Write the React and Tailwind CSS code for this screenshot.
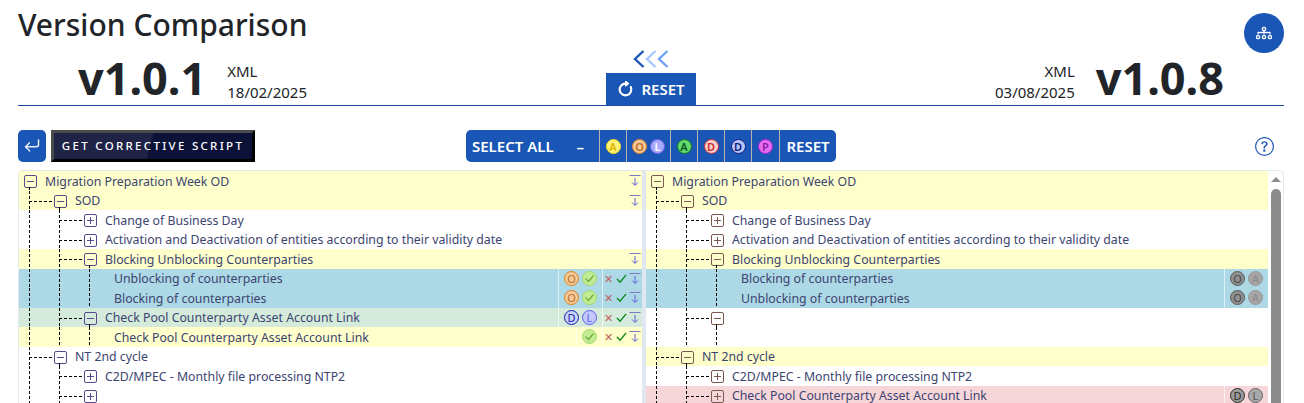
import React from 'react'
import { BsArrowClockwise, BsArrowReturnLeft, BsDiagram3, BsQuestionCircle } from 'react-icons/bs'

const BADGE_STYLES = {
  yellow: 'bg-[#fff27a] border-[#f2d91a] text-[#e0b400]',
  orange: 'bg-[#f7c89a] border-[#dc8420] text-[#b86f1e]',
  violet: 'bg-[#a9a8ff] border-[#6a63e0] text-white',
  green: 'bg-[#62d96f] border-[#0c7a1c] text-[#0c5a1c]',
  red: 'bg-[#fbd0d0] border-[#c92a2a] text-[#c92a2a]',
  navy: 'bg-[#b5c6f7] border-[#10187e] text-[#10187e]',
  pink: 'bg-[#e66cf0] border-[#a51fd0] text-[#8a1aa8]',
  blueD: 'bg-[#c7d5fa] border-[#1a1aa8] text-[#1a1aa8]',
  blueL: 'bg-[#c4c8fc] border-[#5a5ff0] text-[#5a5ff0]',
  check: 'bg-[#c2eb95] border-[#a5d96a] text-[#6fae3a]',
  greyDark: 'bg-[#8f8f8f] border-[#5c5c5c] text-[#4a4a4a]',
  greyLight: 'bg-[#a6a6a6] border-[#989898] text-[#8a8a8a]',
  greyD: 'bg-[#9a9a9a] border-[#2c2c2c] text-[#2c2c2c]',
  greyL: 'bg-[#a8a8a8] border-[#666666] text-[#555555]',
}

const ROW_BG = {
  white: 'bg-white',
  yellow: 'bg-[#ffffcc]',
  blue: 'bg-[#add8e6]',
  green: 'bg-[#d4ebdc]',
  pink: 'bg-[#f7d6da]',
}

const V_DASH = 'bg-[linear-gradient(#000_60%,transparent_60%)] bg-[length:1px_5px] bg-repeat-y'
const H_DASH = 'bg-[linear-gradient(90deg,#000_60%,transparent_60%)] bg-[length:5px_1px] bg-repeat-x'

const LEAF_BADGES = [['orange', 'O'], ['check', 'check']]
const GREY_BADGES = [['greyDark', 'O'], ['greyLight', 'A']]

// guides = full height dashed lines before the row, conn = elbow into the box
const leftRows = [
  { guides: 0, box: 'minus', text: 'Migration Preparation Week OD', bg: 'yellow', stem: true, arrow: true },
  { guides: 0, conn: true, box: 'minus', text: 'SOD', bg: 'yellow', stem: true, arrow: true },
  { guides: 1, conn: true, box: 'plus', text: 'Change of Business Day', bg: 'white' },
  { guides: 1, conn: true, box: 'plus', text: 'Activation and Deactivation of entities according to their validity date', bg: 'white' },
  { guides: 1, conn: true, box: 'minus', text: 'Blocking Unblocking Counterparties', bg: 'yellow', stem: true, arrow: true },
  { guides: 3, text: 'Unblocking of counterparties', bg: 'blue', badges: LEAF_BADGES, actions: true },
  { guides: 3, text: 'Blocking of counterparties', bg: 'blue', badges: LEAF_BADGES, actions: true },
  { guides: 1, conn: true, box: 'minus', text: 'Check Pool Counterparty Asset Account Link', bg: 'green', stem: true, badges: [['blueD', 'D'], ['blueL', 'L']], actions: true },
  { guides: 3, text: 'Check Pool Counterparty Asset Account Link', bg: 'yellow', badges: [['check', 'check']], actions: true },
  { guides: 0, conn: true, box: 'minus', text: 'NT 2nd cycle', bg: 'white', stem: true },
  { guides: 1, conn: true, box: 'plus', text: 'C2D/MPEC - Monthly file processing NTP2', bg: 'white' },
  { guides: 1, conn: true, box: 'plus', text: '', bg: 'white' },
]

const rightRows = [
  { guides: 0, box: 'minus', text: 'Migration Preparation Week OD', bg: 'yellow', stem: true },
  { guides: 0, conn: true, box: 'minus', text: 'SOD', bg: 'yellow', stem: true },
  { guides: 1, conn: true, box: 'plus', text: 'Change of Business Day', bg: 'white' },
  { guides: 1, conn: true, box: 'plus', text: 'Activation and Deactivation of entities according to their validity date', bg: 'white' },
  { guides: 1, conn: true, box: 'minus', text: 'Blocking Unblocking Counterparties', bg: 'yellow', stem: true },
  { guides: 3, text: 'Blocking of counterparties', bg: 'blue', badges: GREY_BADGES },
  { guides: 3, text: 'Unblocking of counterparties', bg: 'blue', badges: GREY_BADGES },
  { guides: 1, conn: true, box: 'minus', text: '', bg: 'white', stem: true },
  { guides: 3, text: '', bg: 'white' },
  { guides: 0, conn: true, box: 'minus', text: 'NT 2nd cycle', bg: 'yellow', stem: true },
  { guides: 1, conn: true, box: 'plus', text: 'C2D/MPEC - Monthly file processing NTP2', bg: 'white' },
  { guides: 1, conn: true, box: 'plus', text: 'Check Pool Counterparty Asset Account Link', bg: 'pink', badges: [['greyD', 'D'], ['greyL', 'L']] },
]

function Badge({ tone, label }) {
  return (
    <span className={`w-[15px] h-[15px] text-[11px] ${BADGE_STYLES[tone]} rounded-full border flex items-center justify-center leading-none shrink-0`}>
      {label === 'check' ? (
        <svg className="w-[11px] h-[11px]" viewBox="0 0 11 11" fill="none" stroke="currentColor" strokeWidth="1.2">
          <path d="M1.5 5.5L4.5 8.5L9.5 2.5" />
        </svg>
      ) : label}
    </span>
  )
}

function DownToLine() {
  return (
    <svg className="w-[12px] h-[13px] shrink-0" viewBox="0 0 12 13" fill="none" stroke="#6060d8" strokeWidth="1">
      <path d="M0.5 1.5H11.5" stroke="#7a7ac0" />
      <path d="M6 4V11M3 8.5L6 11.5L9 8.5" />
    </svg>
  )
}

function Chevron({ color }) {
  return (
    <svg className={`w-[12px] h-[18px] ${color}`} viewBox="0 0 12 18" fill="none" stroke="currentColor" strokeWidth="2.4">
      <path d="M10.5 1L2 9L10.5 17" />
    </svg>
  )
}

function Box({ kind, stem, color }) {
  return (
    <span className={`relative mt-[2px] w-[13px] h-[13px] shrink-0 rounded-[2px] border ${color} flex items-center justify-center`}>
      <span className="absolute w-[7px] h-px bg-current" />
      {kind === 'plus' && <span className="absolute w-px h-[7px] bg-current" />}
      {stem && <span className={`absolute left-[4px] top-full w-px h-[4px] ${V_DASH}`} />}
    </span>
  )
}

function Row({ row, boxColor, showActions }) {
  return (
    <div className={`flex items-center h-[19.5px] pl-[10px] ${ROW_BG[row.bg]}`}>
      {Array.from({ length: row.guides }).map((_, i) => (
        <span key={i} className={`w-[30px] h-full shrink-0 ${V_DASH}`} />
      ))}
      {row.conn && (
        <span className={`w-[25px] h-full shrink-0 flex items-center ${V_DASH}`}>
          <span className={`w-full h-px mt-[2px] ${H_DASH}`} />
        </span>
      )}
      {row.box ? (
        <>
          <span className={`flex ${row.conn ? '' : '-ml-[5px]'}`}>
            <Box kind={row.box} stem={row.stem} color={boxColor} />
          </span>
          <span className="ml-[8px] mt-[2px] whitespace-nowrap">{row.text}</span>
        </>
      ) : (
        <span className="-ml-[12px] pl-[7px] mt-[2px] whitespace-nowrap">{row.text}</span>
      )}
      <div className="ml-auto h-full flex items-center">
        {row.badges && (
          <div className="h-full flex items-center gap-[3px] border-l border-white/60 px-[5px]">
            {row.badges.map(([tone, label]) => (
              <Badge key={label} tone={tone} label={label} />
            ))}
          </div>
        )}
        {showActions && (row.actions || row.arrow) && (
          <div className={`h-full w-[40px] flex items-center gap-[2px] pr-[1px] justify-end ${row.actions ? 'border-l border-white/60' : ''}`}>
            {row.actions && <span className="text-[#c0605a] text-[11px] leading-none w-[12px] text-center">✕</span>}
            {row.actions && (
              <svg className="w-[12px] h-[11px]" viewBox="0 0 12 11" fill="none" stroke="#0c8a1c" strokeWidth="1.5">
                <path d="M1 6L4.5 9.5L11 1.5" />
              </svg>
            )}
            <DownToLine />
          </div>
        )}
      </div>
    </div>
  )
}

function Panel({ rows, boxColor, width, actions }) {
  return (
    <div className={`${width} shrink-0`}>
      {rows.map((row, i) => (
        <Row key={i} row={row} boxColor={boxColor} showActions={actions} />
      ))}
    </div>
  )
}

function Divider() {
  return <span className="w-px self-stretch bg-[#b8b3ad]" />
}

export default function App() {
  return (
    <div className="w-[1304px] h-[403px] overflow-hidden bg-white text-[#212529] font-['Noto_Sans',sans-serif]">
      <div className="pl-[18px] pr-[20px]">
        {/* Title */}
        <div className="h-[51px] flex items-center justify-between">
          <h1 className="text-[30px] leading-none font-medium -mt-[2px]">Version Comparison</h1>
          <button className="w-[40px] h-[40px] rounded-full bg-[#1a56b5] text-white flex items-center justify-center mt-[15px]">
            <BsDiagram3 className="w-[16px] h-[16px] stroke-[0.4]" />
          </button>
        </div>

        {/* Versions */}
        <div className="h-[55px] flex justify-between items-end border-b border-[#1a4a9c]">
          <div className="flex items-end pl-[60px] w-[400px]">
            <span className="text-[45px] leading-[52px] font-bold mb-[1px]">v1.0.1</span>
            <div className="ml-[21px] text-[15px] leading-[21px] mb-[2px]">
              <div>XML</div>
              <div>18/02/2025</div>
            </div>
          </div>
          <div className="flex flex-col items-center">
            <div className="flex mb-[5px]">
              <Chevron color="text-[#1a56b5]" />
              <Chevron color="text-[#a6c8ff]" />
              <Chevron color="text-[#6ea0f5]" />
            </div>
            <button className="w-[90px] h-[32px] bg-[#1a56b5] text-white text-[15px] font-semibold flex items-center justify-center gap-[7px]">
              <BsArrowClockwise className="w-[17px] h-[17px] stroke-1" />
              RESET
            </button>
          </div>
          <div className="flex items-end justify-end pr-[60px] w-[400px]">
            <div className="mr-[21px] text-[15px] leading-[21px] mb-[2px] text-right">
              <div>XML</div>
              <div>03/08/2025</div>
            </div>
            <span className="text-[45px] leading-[52px] font-bold mb-[1px]">v1.0.8</span>
          </div>
        </div>

        {/* Toolbar */}
        <div className="mt-[24px] h-[32px] flex items-center">
          <button className="w-[28px] h-[32px] rounded-[5px] bg-[#1a56b5] text-white flex items-center justify-center">
            <BsArrowReturnLeft className="w-[16px] h-[16px] stroke-[0.4]" />
          </button>
          <button className="ml-[5px] w-[204px] h-[32px] border-[3px] border-t-[#4a4a4a] border-l-[#4a4a4a] border-r-black border-b-black bg-[linear-gradient(105deg,#1f2447_48%,#0c1138_49%)] text-white text-[11.5px] font-medium tracking-[2.3px] flex items-center justify-center whitespace-nowrap">
            GET CORRECTIVE SCRIPT
          </button>
          <div className="ml-[211px] h-[32px] w-[370px] rounded-[5px] bg-[#1a56b5] text-white font-semibold text-[15px] flex items-stretch">
            <div className="w-[133px] flex items-center justify-between px-[6px]">
              <span>SELECT ALL</span>
              <span className="pr-[9px]">–</span>
            </div>
            <Divider />
            <div className="w-[26px] flex items-center justify-center"><Badge tone="yellow" label="A" /></div>
            <Divider />
            <div className="w-[43px] flex items-center justify-center gap-[3px]">
              <Badge tone="orange" label="O" />
              <Badge tone="violet" label="L" />
            </div>
            <Divider />
            <div className="w-[26px] flex items-center justify-center"><Badge tone="green" label="A" /></div>
            <Divider />
            <div className="w-[26px] flex items-center justify-center"><Badge tone="red" label="D" /></div>
            <Divider />
            <div className="w-[26px] flex items-center justify-center"><Badge tone="navy" label="D" /></div>
            <Divider />
            <div className="w-[27px] flex items-center justify-center"><Badge tone="pink" label="P" /></div>
            <Divider />
            <div className="flex-1 flex items-center justify-center">RESET</div>
          </div>
          <BsQuestionCircle className="ml-auto mr-[10px] w-[19px] h-[19px] text-[#1a56b5]" />
        </div>

        {/* Trees */}
        <div className="mt-[8px] flex rounded-t-[5px] border-t border-x border-[#e4e8f2] text-[12.3px] text-[#3c4470]">
          <Panel rows={leftRows} boxColor="border-[#5a4a8c] text-[#5a4a8c]" width="w-[623px]" actions />
          <div className="w-[4px] shrink-0 bg-[#e0e7f0]" />
          <Panel rows={rightRows} boxColor="border-[#7a5a50] text-[#7a5a50]" width="w-[622px]" />
          <div className="flex-1 flex flex-col items-center">
            <span className="mt-[6px] w-0 h-0 border-x-[5px] border-x-transparent border-b-[5px] border-b-[#8c8c8c]" />
            <span className="mt-[7px] w-[10px] h-[300px] rounded-full bg-[#8c8c8c]" />
          </div>
        </div>
      </div>
    </div>
  )
}
